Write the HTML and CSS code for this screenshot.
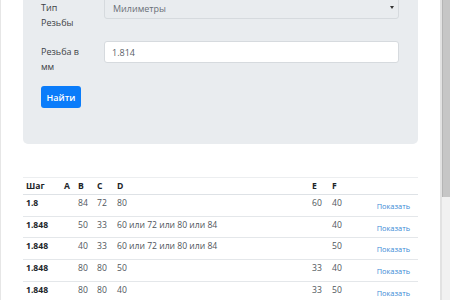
FILE: index.html
```html
<!DOCTYPE html>
<html lang="ru">
	<head>
		<meta charset="UTF-8" />
		<meta name="viewport" content="width=device-width, initial-scale=1.0" />
		<title>Резьба</title>
		<link rel="stylesheet" href="styles.css">
	</head>
	<body>
		<div class="page">
			<div class="jumbotron">
				<form class="search-form">
					<div class="form-row">
						<label for="thread-type">Тип Резьбы</label>
						<div class="select-wrap">
							<select id="thread-type" class="form-control select" disabled>
								<option>Милиметры</option>
							</select>
						</div>
					</div>
					<div class="form-row">
						<label for="thread-mm">Резьба в мм</label>
						<input type="text" id="thread-mm" class="form-control" value="1.814" />
					</div>
					<button type="button" class="submit-btn">Найти</button>
				</form>
			</div>

			<table class="results">
				<colgroup>
					<col style="width: 38px" />
					<col style="width: 14px" />
					<col style="width: 19px" />
					<col style="width: 20px" />
					<col />
					<col style="width: 20px" />
					<col style="width: 20px" />
					<col style="width: 69px" />
				</colgroup>
				<thead>
					<tr>
						<th>Шаг</th>
						<th>A</th>
						<th>B</th>
						<th>C</th>
						<th>D</th>
						<th>E</th>
						<th>F</th>
						<th></th>
					</tr>
				</thead>
				<tbody>
					<tr>
						<td class="step">1.8</td>
						<td></td>
						<td>84</td>
						<td>72</td>
						<td>80</td>
						<td>60</td>
						<td>40</td>
						<td class="action"><a href="#">Показать</a></td>
					</tr>
					<tr>
						<td class="step">1.848</td>
						<td></td>
						<td>50</td>
						<td>33</td>
						<td>60 или 72 или 80 или 84</td>
						<td></td>
						<td>40</td>
						<td class="action"><a href="#">Показать</a></td>
					</tr>
					<tr>
						<td class="step">1.848</td>
						<td></td>
						<td>40</td>
						<td>33</td>
						<td>60 или 72 или 80 или 84</td>
						<td></td>
						<td>50</td>
						<td class="action"><a href="#">Показать</a></td>
					</tr>
					<tr>
						<td class="step">1.848</td>
						<td></td>
						<td>80</td>
						<td>80</td>
						<td>50</td>
						<td>33</td>
						<td>40</td>
						<td class="action"><a href="#">Показать</a></td>
					</tr>
					<tr>
						<td class="step">1.848</td>
						<td></td>
						<td>80</td>
						<td>80</td>
						<td>40</td>
						<td>33</td>
						<td>50</td>
						<td class="action"><a href="#">Показать</a></td>
					</tr>
				</tbody>
			</table>
		</div>

		<div class="scrollbar">
			<div class="scrollbar-thumb"></div>
		</div>
	</body>
</html>
```

FILE: styles.css
```css
html,
body {
	margin: 0;
	height: 100%;
	overflow: hidden;
}
body {
	font-family: "Open Sans", "Noto Sans", sans-serif;
	font-size: 9px;
	line-height: 14.5px;
	color: #212529;
	background-color: #fff;
}
.page {
	border-left: 1px solid #e6e6e6;
	padding: 0 32px 0 22px;
}
.jumbotron {
	margin-top: -24px;
	padding: 21px 19px 36px 18px;
	background-color: #e9ecef;
	border-radius: 5px;
}
.form-row {
	display: grid;
	grid-template-columns: 63px 1fr;
	margin-bottom: 7px;
}
.form-row + .form-row {
	margin-bottom: 8px;
}
.form-row label {
	padding: 4px 19px 4px 0;
	color: #3d4246;
}
.form-control {
	box-sizing: border-box;
	width: 100%;
	height: 22px;
	margin: 0;
	padding: 0 7px;
	font-family: inherit;
	font-size: 9px;
	color: #5a6167;
	background-color: #fff;
	border: 1px solid #d6dade;
	border-radius: 3px;
	outline: none;
}
.select-wrap {
	position: relative;
}
.select {
	appearance: none;
	-webkit-appearance: none;
	padding-left: 8px;
	background-color: #e9ecef;
	opacity: 1;
	color: #6a7077;
}
.select-wrap::after {
	content: "";
	position: absolute;
	right: 5px;
	top: 9px;
	border-left: 2px solid transparent;
	border-right: 2px solid transparent;
	border-top: 3px solid #333;
}
.submit-btn {
	display: block;
	width: 40px;
	height: 22px;
	padding: 0;
	font-family: inherit;
	font-size: 9px;
	font-weight: 600;
	color: #fff;
	background-color: #0a7cfa;
	border: none;
	border-radius: 3px;
	cursor: pointer;
}
.results {
	width: 100%;
	margin-top: 33px;
	border-collapse: collapse;
	table-layout: fixed;
	font-size: 8.6px;
	line-height: 13px;
}
.results th,
.results td {
	padding: 2px 3px 1px;
	text-align: left;
	vertical-align: top;
	white-space: nowrap;
}
.results thead th {
	font-weight: 700;
	border-top: 1px solid #eceef0;
	border-bottom: 1px solid #dee2e6;
	height: 12px;
}
.results tbody td {
	height: 17.7px;
	color: #50565c;
	border-top: 1px solid #e4e7ea;
}
.results tbody tr:first-child td {
	border-top: none;
}
.results .step {
	font-weight: 700;
	color: #212529;
}
.results .action {
	text-align: right;
	padding-right: 8px;
}
.action a {
	display: inline-block;
	padding-top: 3px;
	font-size: 7.4px;
	color: #3a8ad6;
	text-decoration: none;
}
.scrollbar {
	position: fixed;
	top: 0;
	right: 0;
	width: 10px;
	height: 100%;
	background-color: #f1f1f1;
	border-left: 2px solid #e2e2e2;
	box-sizing: border-box;
}
.scrollbar-thumb {
	height: 197px;
	background-color: #c6c6c6;
	border-left: 1px solid #b5b5b5;
}
```
